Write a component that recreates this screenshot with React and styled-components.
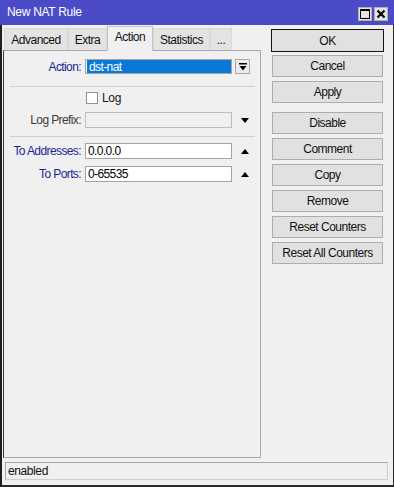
import React from "react";
import styled, { createGlobalStyle } from "styled-components";

const Global = createGlobalStyle`
  html, body { margin: 0; padding: 0; background: #f0f0f0; }
  body { font-family: "Liberation Sans", Arial, sans-serif; font-size: 11px; }
  * { box-sizing: border-box; }
`;

const Window = styled.div`
  width: 394px;
  height: 487px;
  display: flex;
  flex-direction: column;
  background: #f0f0f0;
  font-family: "Liberation Sans", Arial, sans-serif;
  font-size: 12px;
  letter-spacing: -0.6px;
  color: #000;
`;

const TitleBar = styled.div`
  height: 25px;
  flex: none;
  background: #4b4bc8;
  display: flex;
  align-items: center;
  padding: 0 6px 0 7px;
  color: #fff;
  font-size: 12px;
  letter-spacing: -0.3px;
`;

const Title = styled.div`
  flex: 1;
  padding-bottom: 1px;
`;

const TitleButtons = styled.div`
  display: flex;
  gap: 2px;
  margin-top: 2px;
`;

const TitleBtn = styled.div`
  width: 14px;
  height: 14px;
  background: #e4e4e4;
  border: 1px solid #b0b0b0;
  display: flex;
  align-items: center;
  justify-content: center;
`;

const Frame = styled.div`
  flex: 1;
  display: flex;
  flex-direction: column;
  border-left: 2px solid #1e1e1e;
  border-right: 1px solid #2a2a2a;
  border-bottom: 2px solid #2a2a2a;
`;

const Main = styled.div`
  flex: 1;
  display: flex;
  min-height: 0;
`;

const LeftCol = styled.div`
  width: 258px;
  margin-left: 1px;
  display: flex;
  flex-direction: column;
`;

const Tabs = styled.div`
  height: 25px;
  display: flex;
  align-items: flex-end;
  padding-left: 1px;
`;

const Tab = styled.div`
  width: ${(p) => p.$w}px;
  height: ${(p) => (p.$active ? 25 : 22)}px;
  background: ${(p) => (p.$active ? "#f0f0f0" : "#e3e3e3")};
  border: 1px solid ${(p) => (p.$active ? "#c4c4c4" : "#d8d8d8")};
  border-bottom: none;
  display: flex;
  align-items: center;
  justify-content: center;
  font-size: 12px;
  letter-spacing: -0.5px;
  padding-bottom: ${(p) => (p.$active ? 4 : 0)}px;
  color: #111;
  position: relative;
  z-index: ${(p) => (p.$active ? 1 : 0)};
  margin-bottom: ${(p) => (p.$active ? -1 : 0)}px;
`;

const Panel = styled.div`
  flex: 1;
  border: 1px solid #a8a8a8;
  border-left-color: #3a3a3a;
  background: #f0f0f0;
  display: flex;
  flex-direction: column;
  padding-top: 8px;
`;

const Row = styled.div`
  display: flex;
  align-items: center;
  height: ${(p) => p.$h || 16}px;
  margin-top: ${(p) => p.$mt || 0}px;
`;

const Label = styled.div`
  width: 78px;
  text-align: right;
  padding-right: 1px;
  white-space: nowrap;
  color: ${(p) => (p.$blue ? "#1f1f98" : "#3a3a3a")};
  flex: none;
`;

const Field = styled.div`
  margin-left: 3px;
  width: 147px;
  height: 100%;
  flex: none;
  border: 1px solid ${(p) => (p.$disabled ? "#bdbdbd" : "#a3a3a3")};
  background: ${(p) => (p.$disabled ? "#f0f0f0" : "#fff")};
  display: flex;
  align-items: center;
  padding-left: 2px;
  color: #000;
`;

const Selected = styled.div`
  flex: 1;
  height: 100%;
  margin: 0 0 0 -1px;
  background: #0a78d7;
  color: #fff;
  display: flex;
  align-items: center;
  padding-left: 2px;
`;

const DropBtn = styled.div`
  margin-left: 3px;
  width: 15px;
  height: 15px;
  border: 1px solid #a8a8a8;
  background: #ececec;
  display: flex;
  align-items: center;
  justify-content: center;
`;

const ArrowSlot = styled.div`
  width: 18px;
  display: flex;
  justify-content: center;
  padding-left: 8px;
`;

const Separator = styled.div`
  height: 1px;
  background: #cfcfcf;
  margin: ${(p) => p.$mt}px 5px 0 6px;
`;

const CheckRow = styled.label`
  display: flex;
  align-items: center;
  margin-left: 82px;
  height: 12px;
  margin-top: ${(p) => p.$mt}px;
  color: #1a1a1a;
  font-size: 12px;
  letter-spacing: -0.3px;
`;

const Box = styled.span`
  width: 12px;
  height: 12px;
  border: 1px solid #8f8f8f;
  background: #fff;
  margin-right: 4px;
`;

const RightCol = styled.div`
  width: 113px;
  margin-left: 10px;
  padding-top: 4px;
  display: flex;
  flex-direction: column;
`;

const Button = styled.div`
  height: ${(p) => (p.$default ? 23 : 22)}px;
  margin: ${(p) => p.$mt || 0}px ${(p) => (p.$default ? 0 : 1)}px 0;
  border: 1px solid ${(p) => (p.$default ? "#141414" : "#adadad")};
  background: #e1e1e1;
  display: flex;
  align-items: center;
  justify-content: center;
  font-size: 12px;
  letter-spacing: -0.5px;
  color: #111;
`;

const Status = styled.div`
  height: 18px;
  margin: 4px 5px 5px 3px;
  border: 1px solid #a8a8a8;
  border-right-color: #d0d0d0;
  border-bottom-color: #d0d0d0;
  display: flex;
  align-items: center;
  padding-left: 2px;
  color: #111;
  font-size: 12px;
  letter-spacing: -0.4px;
`;

const Down = () => (
  <svg width="8" height="5" viewBox="0 0 8 5">
    <polygon points="0,0 8,0 4,5" fill="#000" />
  </svg>
);
const Up = () => (
  <svg width="8" height="5" viewBox="0 0 8 5">
    <polygon points="0,5 8,5 4,0" fill="#000" />
  </svg>
);
const BarDown = () => (
  <svg width="8" height="8" viewBox="0 0 8 8">
    <rect x="0" y="0" width="8" height="1.5" fill="#000" />
    <polygon points="0.5,3 7.5,3 4,7.5" fill="#000" />
  </svg>
);

export default function App() {
  return (
    <>
      <Global />
      <Window>
        <TitleBar>
          <Title>New NAT Rule</Title>
          <TitleButtons>
            <TitleBtn>
              <svg width="10" height="10" viewBox="0 0 10 10">
                <rect x="0.5" y="0.5" width="9" height="9" fill="none" stroke="#000" />
                <rect x="0" y="0" width="10" height="2" fill="#000" />
              </svg>
            </TitleBtn>
            <TitleBtn>
              <svg width="10" height="10" viewBox="0 0 10 10">
                <path d="M1.5 1.5 L8.5 8.5 M8.5 1.5 L1.5 8.5" stroke="#000" strokeWidth="2.2" />
              </svg>
            </TitleBtn>
          </TitleButtons>
        </TitleBar>
        <Frame>
          <Main>
            <LeftCol>
              <Tabs>
                <Tab $w={64}>Advanced</Tab>
                <Tab $w={39}>Extra</Tab>
                <Tab $w={46} $active>Action</Tab>
                <Tab $w={57}>Statistics</Tab>
                <Tab $w={22}>...</Tab>
              </Tabs>
              <Panel>
                <Row $h={15}>
                  <Label $blue>Action:</Label>
                  <Field>
                    <Selected>dst-nat</Selected>
                  </Field>
                  <DropBtn>
                    <BarDown />
                  </DropBtn>
                </Row>
                <Separator $mt={12} />
                <CheckRow $mt={5}>
                  <Box />
                  Log
                </CheckRow>
                <Row $mt={8}>
                  <Label>Log Prefix:</Label>
                  <Field $disabled />
                  <ArrowSlot>
                    <Down />
                  </ArrowSlot>
                </Row>
                <Separator $mt={8} />
                <Row $mt={6}>
                  <Label $blue>To Addresses:</Label>
                  <Field>0.0.0.0</Field>
                  <ArrowSlot>
                    <Up />
                  </ArrowSlot>
                </Row>
                <Row $mt={7}>
                  <Label $blue>To Ports:</Label>
                  <Field>0-65535</Field>
                  <ArrowSlot>
                    <Up />
                  </ArrowSlot>
                </Row>
              </Panel>
            </LeftCol>
            <RightCol>
              <Button $default>OK</Button>
              <Button $mt={3}>Cancel</Button>
              <Button $mt={4}>Apply</Button>
              <Button $mt={9}>Disable</Button>
              <Button $mt={4}>Comment</Button>
              <Button $mt={4}>Copy</Button>
              <Button $mt={4}>Remove</Button>
              <Button $mt={4}>Reset Counters</Button>
              <Button $mt={4}>Reset All Counters</Button>
            </RightCol>
          </Main>
          <Status>enabled</Status>
        </Frame>
      </Window>
    </>
  );
}
